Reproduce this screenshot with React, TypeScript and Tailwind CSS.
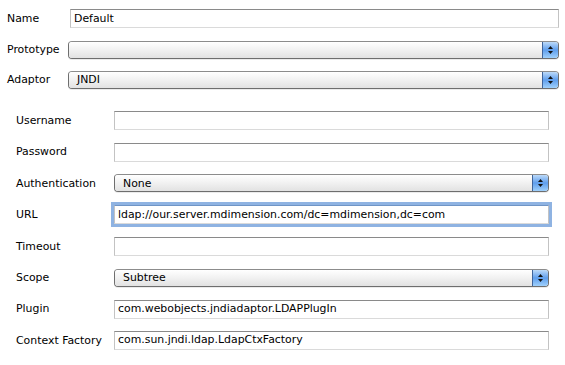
const font = { fontFamily: '"DejaVu Sans", "Lucida Grande", Verdana, sans-serif' };

function TextField({ value, focused }: { value?: string; focused?: boolean }) {
  return (
    <div
      className={
        "flex-1 h-[19px] flex items-center pl-[3px] bg-white border border-[#c3c3c3] border-t-[#8a8a8a] border-b-[#dadada] " +
        (focused ? "ring-[3px] ring-[#8fb3e2] border-[#7095c6] border-t-[#7095c6] border-b-[#7095c6]" : "")
      }
    >
      <span className="text-[10.9px] text-black leading-none whitespace-nowrap pt-px">{value}</span>
    </div>
  );
}

function PopUp({ value }: { value?: string }) {
  return (
    <div className="flex-1 h-[18px] flex rounded-[4px] border border-[#6e6e6e] border-t-[#8c8c8c] overflow-hidden shadow-[0_1px_0_rgba(0,0,0,0.08)]">
      <div className="flex-1 flex items-center pl-[8px] bg-linear-to-b from-white via-[#f1f1f1] to-[#e2e2e2]">
        <span className="text-[10.9px] text-black leading-none whitespace-nowrap pt-px">{value}</span>
      </div>
      <div className="w-[16px] border-l border-[#3f659c] flex flex-col items-center justify-center gap-[2px] bg-linear-to-b from-[#bcdaf9] via-[#5f9eec] to-[#9fd0fb]">
        <svg width="5" height="3" viewBox="0 0 5 3">
          <path d="M2.5 0 L5 3 L0 3 Z" fill="#111" />
        </svg>
        <svg width="5" height="3" viewBox="0 0 5 3">
          <path d="M0 0 L5 0 L2.5 3 Z" fill="#111" />
        </svg>
      </div>
    </div>
  );
}

function Row({ label, labelW, children, h }: { label: string; labelW: string; children: React.ReactNode; h: string }) {
  return (
    <div className={"flex items-center " + h}>
      <div className={"shrink-0 text-[10.9px] text-black pt-px " + labelW}>{label}</div>
      {children}
    </div>
  );
}

export default function App() {
  return (
    <div className="w-[565px] h-[365px] bg-white overflow-hidden" style={font}>
      <div className="flex flex-col pt-[3px] pl-[7px] pr-[6px]">
        <Row label="Name" labelW="w-[63px]" h="h-[31px]">
          <TextField value="Default" />
        </Row>
        <Row label="Prototype" labelW="w-[61px]" h="h-[31px]">
          <PopUp />
        </Row>
        <Row label="Adaptor" labelW="w-[61px]" h="h-[30px]">
          <PopUp value="JNDI" />
        </Row>
      </div>
      <div className="flex flex-col mt-[10px] pl-[16px] pr-[16px]">
        <Row label="Username" labelW="w-[98px]" h="h-[31.4px]">
          <TextField />
        </Row>
        <Row label="Password" labelW="w-[98px]" h="h-[31.4px]">
          <TextField />
        </Row>
        <Row label="Authentication" labelW="w-[98px]" h="h-[31.4px]">
          <PopUp value="None" />
        </Row>
        <Row label="URL" labelW="w-[98px]" h="h-[31.4px]">
          <TextField value="ldap://our.server.mdimension.com/dc=mdimension,dc=com" focused />
        </Row>
        <Row label="Timeout" labelW="w-[98px]" h="h-[31.4px]">
          <TextField />
        </Row>
        <Row label="Scope" labelW="w-[98px]" h="h-[31.4px]">
          <PopUp value="Subtree" />
        </Row>
        <Row label="Plugin" labelW="w-[98px]" h="h-[31.4px]">
          <TextField value="com.webobjects.jndiadaptor.LDAPPlugIn" />
        </Row>
        <Row label="Context Factory" labelW="w-[98px]" h="h-[31.4px]">
          <TextField value="com.sun.jndi.ldap.LdapCtxFactory" />
        </Row>
      </div>
    </div>
  );
}
